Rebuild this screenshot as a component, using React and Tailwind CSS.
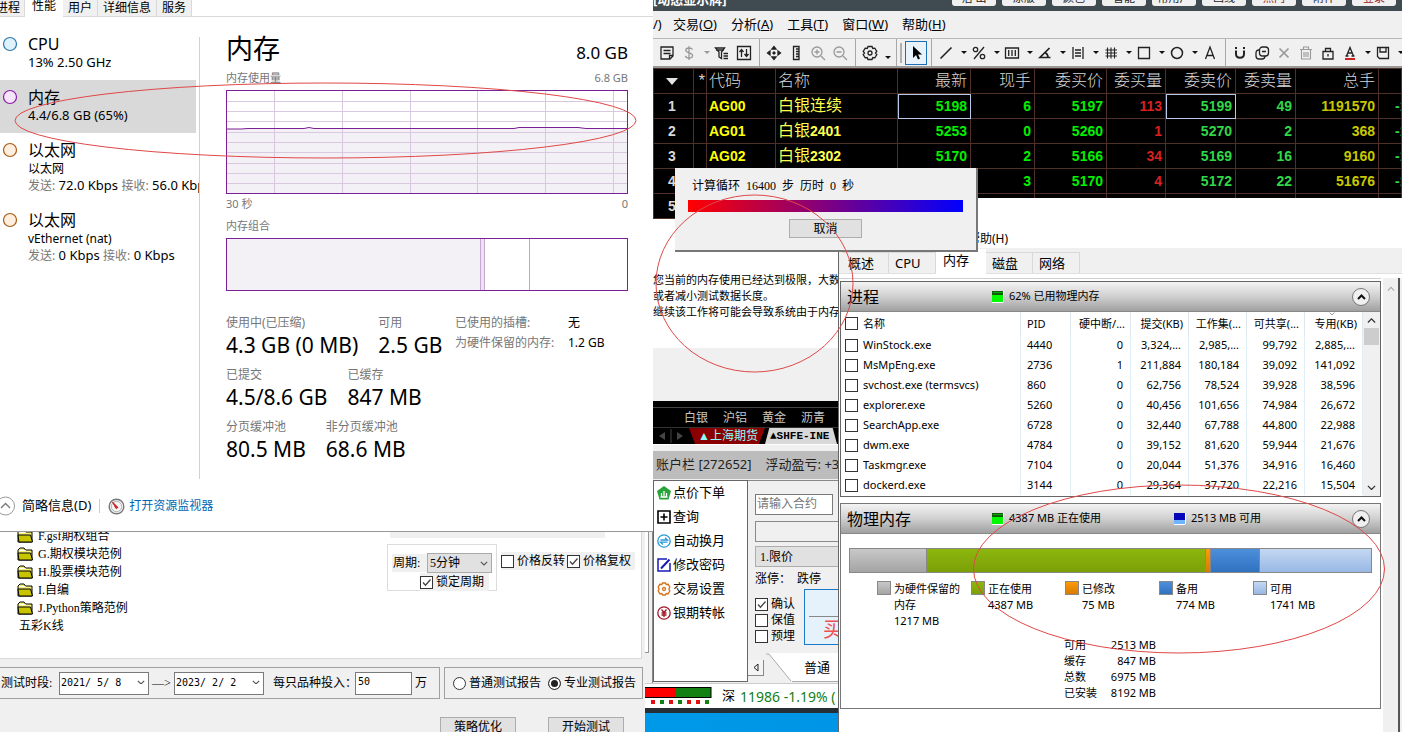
import { useState } from 'react';

const quotes = [
  { code: 'AG00', name: '白银', suffix: '连续', last: '5198', vol: '6', bid: '5197', bidVol: '113', ask: '5199', askVol: '49', total: '1191570' },
  { code: 'AG01', name: '白银', suffix: '2401', last: '5253', vol: '0', bid: '5260', bidVol: '1', ask: '5270', askVol: '2', total: '368' },
  { code: 'AG02', name: '白银', suffix: '2302', last: '5170', vol: '2', bid: '5166', bidVol: '34', ask: '5169', askVol: '16', total: '9160' },
  { code: '', name: '', suffix: '', last: '', vol: '3', bid: '5170', bidVol: '4', ask: '5172', askVol: '22', total: '51676' },
];

const processes = [
  ['WinStock.exe', '4440', '0', '3,324,...', '2,985,...', '99,792', '2,885,...'],
  ['MsMpEng.exe', '2736', '1', '211,884', '180,184', '39,092', '141,092'],
  ['svchost.exe (termsvcs)', '860', '0', '62,756', '78,524', '39,928', '38,596'],
  ['explorer.exe', '5260', '0', '40,456', '101,656', '74,984', '26,672'],
  ['SearchApp.exe', '6728', '0', '32,440', '67,788', '44,800', '22,988'],
  ['dwm.exe', '4784', '0', '39,152', '81,620', '59,944', '21,676'],
  ['Taskmgr.exe', '7104', '0', '20,044', '51,376', '34,916', '16,460'],
  ['dockerd.exe', '3144', '0', '29,364', '37,720', '22,216', '15,504'],
];

const memory = [
  { label: '为硬件保留的内存', mb: 1217, color: 'bg-linear-to-b from-[#c8c8c8] to-[#a4a4a4]' },
  { label: '正在使用', mb: 4387, color: 'bg-linear-to-b from-[#8db60d] to-[#7ba008]' },
  { label: '已修改', mb: 75, color: 'bg-linear-to-b from-[#ff9a0a] to-[#d67c00]' },
  { label: '备用', mb: 774, color: 'bg-linear-to-b from-[#4e8fdc] to-[#2f72c0]' },
  { label: '可用', mb: 1741, color: 'bg-linear-to-b from-[#c4d8f2] to-[#98b8e4]' },
];

function Chevron({ up, className = '' }) {
  return (
    <svg viewBox="0 0 10 6" className={className} fill="none" stroke="currentColor" strokeWidth="1.4">
      <path d={up ? 'M1 5l4-4 4 4' : 'M1 1l4 4 4-4'} />
    </svg>
  );
}

function Check({ label, checked = false, className = '' }) {
  const [on, setOn] = useState(checked);
  return (
    <label className={`flex items-center ${className}`}>
      <span className="relative flex shrink-0">
        <input
          type="checkbox"
          checked={on}
          onChange={() => setOn(!on)}
          className="h-[13px] w-[13px] appearance-none border border-[#333] bg-white"
        />
        {on && (
          <svg viewBox="0 0 13 13" className="pointer-events-none absolute inset-0" fill="none" stroke="#444" strokeWidth="1.3">
            <path d="M3 6.5l2.5 2.7L10.5 3.5" />
          </svg>
        )}
      </span>
      <span className="ml-[3px] whitespace-nowrap">{label}</span>
    </label>
  );
}

/* ---------- Task manager ---------- */

function DeviceItem({ title, stroke, fill, selected, children }) {
  return (
    <button className={`flex w-full items-start pb-[9px] pt-[7px] text-left ${selected ? 'bg-[#d9d9d9]' : ''}`}>
      <svg width="18" height="20" viewBox="0 0 18 20" className="shrink-0">
        <circle cx="10" cy="10" r="6.5" fill={fill} stroke={stroke} strokeWidth="1.2" />
      </svg>
      <span className="ml-[10px] block overflow-hidden whitespace-nowrap text-[13px] leading-[17px]">
        <span className="block text-[16px] leading-5">{title}</span>
        {children}
      </span>
    </button>
  );
}

function Rate({ send, recv }) {
  return (
    <span className="block">
      <span className="text-[12px] text-[#777]">发送:</span> {send} <span className="text-[12px] text-[#777]">接收:</span> {recv}
    </span>
  );
}

function UsageChart() {
  return (
    <svg viewBox="0 0 402 104" preserveAspectRatio="none" className="block h-[104px] w-full">
      <rect width="402" height="104" fill="#fff" />
      <path d="M0 39H15L22 38.5H78L83 37.5L88 38.5H288L293 37H352L360 38.5H402V104H0Z" fill="#f4f1f6" />
      <g stroke="#d9c9e0" strokeWidth="1">
        {[11.5, 21.5, 31.5, 42.5, 52.5, 62.5, 73.5, 83.5, 93.5].map((y) => (
          <line key={y} x1="0" x2="402" y1={y} y2={y} />
        ))}
        {[48.5, 116.5, 184.5, 251.5, 319.5, 387.5].map((x) => (
          <line key={x} x1={x} x2={x} y1="0" y2="104" />
        ))}
      </g>
      <path d="M0 39H15L22 38.5H78L83 37.5L88 38.5H288L293 37.5H352L360 38.5H402" fill="none" stroke="#7a1f96" />
      <rect x="0.5" y="0.5" width="401" height="103" fill="none" stroke="#7a1f96" />
    </svg>
  );
}

function Stat({ label, value }) {
  return (
    <div className="whitespace-nowrap">
      <div className="text-[12px] leading-5 text-[#777]">{label}</div>
      <div className="text-[21px] leading-6">{value}</div>
    </div>
  );
}

function TaskManager() {
  const tabs = ['进程', '性能', '用户', '详细信息', '服务'];
  return (
    <section className="absolute left-0 top-0 z-30 flex h-[532px] w-[653px] flex-col overflow-hidden border-b border-[#999] bg-white text-black">
      <nav className="flex h-[17px] shrink-0 items-end border-b border-[#d9d9d9] text-[12px]">
        {tabs.map((tab) => (
          <button
            key={tab}
            className={
              tab === '性能'
                ? '-mb-px h-[18px] bg-white px-[7px] pb-1 leading-[10px]'
                : tab === '进程'
                  ? 'h-4 w-[25px] border-r border-[#d9d9d9] bg-[#f0f0f0] pr-1 leading-[10px] -indent-1'
                  : 'h-4 border-r border-[#d9d9d9] bg-[#f0f0f0] px-[5px] leading-[10px]'
            }
          >
            {tab}
          </button>
        ))}
      </nav>

      <div className="flex min-h-0 flex-1">
        <aside className="mt-5 flex h-[442px] w-[200px] shrink-0 flex-col border-r border-[#d0d0d0]">
          <div className="-mt-[10px] w-full">
            <DeviceItem title="CPU" stroke="#2a7ab0" fill="#dff1fa">
              <span className="block">13% 2.50 GHz</span>
            </DeviceItem>
            <div className="pr-[3px]">
              <DeviceItem title="内存" stroke="#8a1fa8" fill="#f6e4fb" selected>
                <span className="block">4.4/6.8 GB (65%)</span>
              </DeviceItem>
            </div>
            <DeviceItem title="以太网" stroke="#a85a14" fill="#fdeedd">
              <span className="block text-[12px]">以太网</span>
              <Rate send="72.0 Kbps" recv="56.0 Kbps" />
            </DeviceItem>
            <DeviceItem title="以太网" stroke="#a85a14" fill="#fdeedd">
              <span className="block text-[12px]">vEthernet (nat)</span>
              <Rate send="0 Kbps" recv="0 Kbps" />
            </DeviceItem>
          </div>
        </aside>

        <main className="flex-1 pl-[26px] pr-[25px] pt-3">
          <header className="flex items-end justify-between">
            <h1 className="text-[27px] leading-10">内存</h1>
            <span className="text-[17px] leading-8">8.0 GB</span>
          </header>
          <div className="flex justify-between pb-[3px] text-[11px] leading-[18px] text-[#777]">
            <span>内存使用量</span>
            <span>6.8 GB</span>
          </div>
          <UsageChart />
          <div className="flex justify-between pt-[2px] text-[11px] leading-4 text-[#777]">
            <span>30 秒</span>
            <span>0</span>
          </div>
          <div className="pb-1 pt-[6px] text-[11px] leading-4 text-[#777]">内存组合</div>
          <div className="flex h-[53px] border border-[#7a1f96]">
            <div className="w-[253px] bg-[#f4f1f6]" />
            <div className="w-[5px] border-x border-[#c4a8d0] bg-[#efe0f4]" />
            <div className="w-[45px] border-r border-[#bda8c6]" />
          </div>

          <div className="flex justify-between pt-[22px]">
            <div className="flex flex-col gap-2">
              <div className="flex gap-5">
                <Stat label="使用中(已压缩)" value="4.3 GB (0 MB)" />
                <Stat label="可用" value="2.5 GB" />
              </div>
              <div className="flex gap-5">
                <Stat label="已提交" value="4.5/8.6 GB" />
                <Stat label="已缓存" value="847 MB" />
              </div>
              <div className="flex gap-5">
                <Stat label="分页缓冲池" value="80.5 MB" />
                <Stat label="非分页缓冲池" value="68.6 MB" />
              </div>
            </div>
            <dl className="grid w-[173px] grid-cols-[113px_1fr] content-start whitespace-nowrap text-[12px] leading-5">
              <dt className="text-[#777]">已使用的插槽:</dt>
              <dd>无</dd>
              <dt className="text-[#777]">为硬件保留的内存:</dt>
              <dd>1.2 GB</dd>
            </dl>
          </div>
        </main>
      </div>

      <footer className="flex h-[50px] shrink-0 items-center text-[12px]">
        <button className="flex items-center text-[13px]">
          <svg width="15" height="20" viewBox="0 0 15 20" fill="none">
            <circle cx="5.5" cy="10" r="9" stroke="#999" />
            <path d="M1 12l4.5-4.5L10 12" stroke="#777" strokeWidth="1.3" />
          </svg>
          <span className="ml-[7px]">简略信息(D)</span>
        </button>
        <span className="ml-2 h-[14px] w-px bg-[#ccc]" />
        <svg width="17" height="17" viewBox="0 0 17 17" className="ml-2">
          <circle cx="8.5" cy="8.5" r="7.3" fill="#f4f4f6" stroke="#777" strokeWidth="1.4" />
          <circle cx="8.5" cy="8.5" r="5.2" fill="none" stroke="#9aa" strokeWidth="0.8" />
          <path d="M4.5 4l5.5 5.5-2 1z" fill="#c22" stroke="#c22" />
        </svg>
        <a href="#resmon" className="ml-1 text-[#0066b4]">打开资源监视器</a>
      </footer>
    </section>
  );
}

/* ---------- Backtest window ---------- */

function Folder() {
  return (
    <svg width="17" height="14" viewBox="0 0 17 14" className="shrink-0">
      <path d="M1 13V3l2-2h4l1.5 2H15v10z" fill="#f5f07a" stroke="#000" />
      <path d="M1 6h12.5l2 7H2z" fill="#c8c400" stroke="#000" />
      <path d="M2.5 3.5h6" stroke="#fff" />
    </svg>
  );
}

function Period({ id, value, label }) {
  return (
    <div className="relative">
      <select id={id} aria-label={label} className="block h-[23px] w-[90px] appearance-none border border-[#7a7a7a] bg-white pl-px font-['DejaVu_Sans_Mono',monospace] text-[10px] text-black">
        <option>{value}</option>
      </select>
      <Chevron className="pointer-events-none absolute right-1 top-2 w-2 text-[#555]" />
    </div>
  );
}

function BacktestWindow() {
  const folders = ['F.gsf期权组合', 'G.期权模块范例', 'H.股票模块范例', 'I.自编', 'J.Python策略范例'];
  return (
    <section className="absolute bottom-0 left-0 top-[526px] z-20 flex w-[645px] flex-col overflow-hidden bg-[#f0f0f0] font-['Liberation_Serif','Noto_Sans_CJK_SC',serif] text-[12px] leading-[18px] text-black">
      <div className="mr-[3px] flex h-[133px] shrink-0 border-b border-r border-[#d8d8d8] bg-white">
        <ul className="flex-1 pl-[17px] pt-px">
          {folders.map((name) => (
            <li key={name} className="flex h-[18px] items-center gap-1 whitespace-nowrap">
              <Folder />
              {name}
            </li>
          ))}
          <li className="pl-[2px]">五彩K线</li>
        </ul>
        <div className="w-[254px]">
          <div className="ml-[3px] mr-9 h-3 bg-[#f0f0f0]" />
          <div className="mt-[6px] flex items-start">
            <div className="h-[47px] w-[110px] border border-[#dcdcdc] pt-2">
              <div className="flex items-center">
                <label htmlFor="cycle" className="ml-1 w-[35px] whitespace-nowrap bg-[#f0f0f0] pl-px">周期:</label>
                <div className="relative">
                  <select id="cycle" className="block h-5 w-[65px] appearance-none border border-[#aaa] bg-[#e1e1e1] pl-[2px] text-[12px]">
                    <option>5分钟</option>
                  </select>
                  <Chevron className="pointer-events-none absolute right-1 top-2 w-2 text-[#555]" />
                </div>
              </div>
              <Check label="锁定周期" checked className="ml-8 mr-[7px] bg-[#f0f0f0]" />
            </div>
            <div className="ml-1 mt-2 flex gap-[2px] bg-[#f0f0f0] pr-1">
              <Check label="价格反转" />
              <Check label="价格复权" checked />
            </div>
          </div>
        </div>
      </div>

      <div className="mt-2 flex h-8 shrink-0 gap-1 pr-[2px]">
        <div className="flex flex-1 items-center whitespace-nowrap border border-l-0 border-[#a0a0a0] pl-px">
          <span className="w-[58px]">测试时段:</span>
          <Period id="from" label="开始日期" value="2021/ 5/ 8" />
          <span className="w-[25px] text-center">—&gt;</span>
          <Period id="to" label="结束日期" value="2023/ 2/ 2" />
          <label htmlFor="amount" className="ml-[9px] w-[82px]">每只品种投入：</label>
          <input id="amount" defaultValue="50" className="h-[23px] w-[57px] border border-[#7a7a7a] bg-white pb-1 pl-[2px] font-['DejaVu_Sans_Mono',monospace] text-[10px]" />
          <span className="ml-[3px]">万</span>
        </div>
        <div className="flex w-[199px] items-center justify-between border border-[#a0a0a0] pl-2 pr-[6px]">
          {['普通测试报告', '专业测试报告'].map((name, i) => (
            <label key={name} className="flex items-center gap-[3px] whitespace-nowrap">
              <input
                type="radio"
                name="report"
                defaultChecked={i === 1}
                className="h-[13px] w-[13px] appearance-none rounded-full border border-[#333] bg-white checked:bg-[#222] checked:shadow-[inset_0_0_0_2px_#fff]"
              />
              {name}
            </label>
          ))}
        </div>
      </div>

      <div className="mt-[18px] flex justify-end gap-8 pr-[21px]">
        {['策略优化', '开始测试'].map((name) => (
          <button key={name} className="h-5 w-[76px] border border-[#adadad] bg-[#e1e1e1] leading-[18px]">{name}</button>
        ))}
      </div>
    </section>
  );
}

/* ---------- Trading terminal ---------- */

function Tool({ children, label, active, dim }) {
  return (
    <button
      aria-label={label}
      className={`flex h-6 w-[22px] shrink-0 items-center justify-center ${active ? 'border border-[#1a6fb5] bg-[#e9f3fb]' : ''}`}
    >
      <svg width="16" height="16" viewBox="0 0 16 16" fill="none" stroke={dim ? '#999' : '#222'} strokeWidth="1.3">
        {children}
      </svg>
    </button>
  );
}

function Drop({ low, dim }) {
  return (
    <svg width="11" height="6" viewBox="0 0 11 6" className={`shrink-0 ${low ? 'mt-[10px]' : ''}`}>
      <path d="M4 1h6L7 4z" fill={dim ? '#999' : '#111'} />
    </svg>
  );
}

function Sep() {
  return (
    <span className="flex h-7 w-2 shrink-0 justify-center">
      <span className="w-px bg-[#a8a8a8]" />
    </span>
  );
}

function Toolbar() {
  return (
    <div className="flex h-[30px] shrink-0 items-center overflow-hidden border-b-2 border-t border-b-[#999] border-t-[#b8b8b8] bg-[#f0f0f0] pl-[3px]">
      <Tool label="报表"><path d="M2 2h12v9l-3 3H2zM4.500 5.500h7M4.500 8.500h7M14 10.500h-3.500V14" /></Tool>
      <Tool label="资金" dim><path d="M8 1v14M11.500 4.500C11 3.300 9.800 3 8 3 6.200 3 4.800 3.800 4.800 5.300 4.800 8.500 11.600 7 11.600 10.500 11.600 12.200 10 13 8 13 6 13 4.700 12.300 4.400 10.800" /></Tool>
      <Drop dim />
      <Tool label="筛选"><path d="M1.500 3h9L7.500 7v6.500L5 12V7zM2 5h8M9.500 8.500H14M9.500 11H14M9.500 13.500H14" /></Tool>
      <Tool label="排序"><path d="M1.500 1.500h13v13h-13zM5.500 12V5M3.500 7l2-2.500 2 2.500M10.500 4v7M8.500 9l2 2.500 2-2.500" /></Tool>
      <Sep />
      <Tool label="移动"><path d="M6 4l2-2.500L10 4zM6 12l2 2.500 2-2.500zM4 6L1.500 8 4 10zM12 6l2.500 2-2.500 2z" fill="#222" /><path d="M6.500 8h3M8 6.500v3" strokeWidth="2" /></Tool>
      <Tool label="标尺"><path d="M5.500 1.500h5.500v13H5.500zM8 4h3M8 6.500h3M8 9h3M8 11.500h3" /></Tool>
      <Tool label="放大" dim><circle cx="7" cy="7" r="5" /><path d="M11 11l4 4M4.500 7h5M7 4.500v5" /></Tool>
      <Tool label="缩小" dim><circle cx="7" cy="7" r="5" /><path d="M11 11l4 4M4.500 7h5" /></Tool>
      <Sep />
      <Tool label="设置"><path d="M6 1.500h4l.8 2 2-.3 2 3.300L13.500 8l1.300 1.500-2 3.300-2-.3-.8 2H6l-.8-2-2 .3-2-3.300L2.500 8 1.200 6.500l2-3.300 2 .3z" /><circle cx="8" cy="8" r="2" /></Tool>
      <Drop low />
      <Sep />
      <span className="mr-[3px] h-5 w-[3px] border-x border-[#b0b0b0]" />
      <Tool label="选择" active><path d="M5 1v12l3-3 2 4.500 2-1-2-4h4z" fill="#000" stroke="none" /></Tool>
      <Sep />
      <Tool label="直线"><path d="M2.500 13.500l11-11" strokeWidth="1.6" /></Tool>
      <Drop />
      <Tool label="百分比"><circle cx="4.500" cy="4.500" r="2.200" /><circle cx="11.500" cy="11.500" r="2.200" /><path d="M13 2L3 14" /></Tool>
      <Drop />
      <Tool label="周期线"><path d="M1.500 3h13v10h-13zM4.700 5v6M8 5v6M11.300 5v6" /></Tool>
      <Drop />
      <Tool label="角度"><path d="M12.500 3L3 12.500h10.500M8 7.500c2 1 3 2.500 3 5" strokeWidth="1.7" /></Tool>
      <Drop />
      <Tool label="平行线"><path d="M3 2v12M13 2v12M5 5h6M5 8h6M5 11h6" /></Tool>
      <Drop />
      <Tool label="网格"><path d="M4.500 2.500v11M8 2.500v11M11.500 2.500v11M2.500 5h11.500M2.500 8h11.500M2.500 11h11.500" strokeWidth="1.1" /></Tool>
      <Drop />
      <Tool label="矩形"><path d="M2.500 2.500h11v11h-11z" /></Tool>
      <Drop />
      <Tool label="圆"><circle cx="8" cy="8" r="5.500" strokeWidth="1.5" /></Tool>
      <Drop />
      <Tool label="文字"><path d="M3.500 14L8 2l4.500 12M5 10.500h6" /></Tool>
      <Sep />
      <Tool label="吸附"><path d="M4 5.500V9c0 5 8 5 8 0V5.500M4 2v2M12 2v2" strokeWidth="2" /></Tool>
      <Tool label="复制"><rect x="5.500" y="2" width="9" height="9" rx="3" /><path d="M5 5c-2 0-3 1-3 3v3c0 2 1 3 3 3h3c2 0 3-1 3-3M8 6.500h4" /></Tool>
      <Tool label="清除" dim><path d="M3.500 3.500l9 9M12.500 3.500l-9 9" strokeWidth="1.7" /></Tool>
      <Tool label="删除" dim><path d="M2 4.500h12M5.500 4V2h5v2M3.500 5v9h9V5M6 7v5M8 7v5M10 7v5" strokeWidth="1.1" /></Tool>
      <Tool label="锁定"><path d="M3 6.500h10V14H3zM5.500 6V3.500h5V6M8 9v2.500" /></Tool>
      <Tool label="字色"><path d="M4.500 11L8 2.500 11.500 11M5.500 8h5M3.500 11h3M9.500 11h3" /><path d="M3 14h10" stroke="#c22" strokeWidth="2" /></Tool>
      <Drop />
      <Tool label="保存"><path d="M2.500 2.500h11v11h-9l-2-2zM5 3v4h6V3" /></Tool>
      <Drop />
    </div>
  );
}

function QuoteTable() {
  const head = ['代码', '名称', '最新', '现手', '委买价', '委买量', '委卖价', '委卖量', '总手'];
  const cell = 'h-[25px] border border-[#4e3028] pr-[3px]';
  return (
    <table className="w-full table-fixed border-collapse bg-black text-right font-['Liberation_Sans','Noto_Sans_CJK_SC',sans-serif] text-[14px] leading-5">
      <colgroup>
        <col className="w-10" />
        <col className="w-[13px]" />
        <col className="w-[69px]" />
        <col className="w-[122px]" />
        <col className="w-[73px]" />
        <col className="w-16" />
        <col className="w-[72px]" />
        <col className="w-[59px]" />
        <col className="w-[70px]" />
        <col className="w-[60px]" />
        <col className="w-[83px]" />
        <col />
      </colgroup>
      <thead>
        <tr className="text-[16px] text-[#d8d8d8]">
          <th className={`${cell} pr-0`}>
            <svg width="12" height="7" viewBox="0 0 12 7" className="mx-auto"><path d="M0 0h12L6 7z" fill="#e4e4e4" /></svg>
          </th>
          <th className={`${cell} pr-px font-normal`}>*</th>
          {head.map((name, i) => (
            <th key={name} className={`${cell} pl-[2px] font-light ${i < 2 ? 'text-left' : ''}`}>{name}</th>
          ))}
          <th className={cell} />
        </tr>
      </thead>
      <tbody className="font-bold">
        {quotes.map((q, i) => (
          <tr key={i} className="text-[#00f000]">
            <td className={`${cell} pr-0 text-center text-[#d8d8d8]`}>{i + 1}</td>
            <td className={cell} />
            <td className={`${cell} pl-[2px] text-left text-[#ffff00]`}>{q.code}</td>
            <td className={`${cell} whitespace-nowrap pl-[2px] text-left text-[#ffff50]`}>
              <span className="text-[16px] font-normal">{q.name}</span>
              <span className={q.suffix === '连续' ? 'text-[16px] font-normal' : ''}>{q.suffix}</span>
            </td>
            <td className={`${cell} ${i === 0 ? 'outline-1 -outline-offset-1 outline-[#b8c8e8]' : ''}`}>{q.last}</td>
            <td className={cell}>{q.vol}</td>
            <td className={cell}>{q.bid}</td>
            <td className={`${cell} text-[#d82020]`}>{q.bidVol}</td>
            <td className={`${cell} text-[#30d848] ${i === 0 ? 'outline-1 -outline-offset-1 outline-[#b8c8e8]' : ''}`}>{q.ask}</td>
            <td className={`${cell} text-[#30d848]`}>{q.askVol}</td>
            <td className={`${cell} text-[#c8c800]`}>{q.total}</td>
            <td className={`${cell} overflow-hidden whitespace-nowrap pl-4 pr-0 text-left text-[#30d848]`}>-1</td>
          </tr>
        ))}
        <tr>
          <td className={`${cell} pr-0 text-center text-[#d8d8d8]`}>5</td>
          {Array.from({ length: 11 }, (_, i) => (
            <td key={i} className={cell} />
          ))}
        </tr>
      </tbody>
    </table>
  );
}

function AccountMenu() {
  const icon = { width: 14, height: 14, viewBox: '0 0 14 14', fill: 'none', strokeWidth: 1.3 };
  const items = [
    ['点价下单', <svg {...icon}><path d="M7 0l7 5-2.500 8.500h-9L0 5z" fill="#27a33a" /><path d="M4.500 7v4M7 5v6M9.500 7v4M3.500 11h7" stroke="#fff" /></svg>],
    ['查询', <svg {...icon} stroke="#000"><path d="M1 1h12v12H1zM7 3.500v7M3.500 7h7" strokeWidth="1.600" /></svg>],
    ['自动换月', <svg {...icon} stroke="#2a98d8"><circle cx="7" cy="7" r="6.200" /><path d="M3.500 6h7L8 3.800M10.500 8.200h-7L6 10.400" /></svg>],
    ['修改密码', <svg {...icon} stroke="#1818b8"><path d="M10 1H1v12h12V5" strokeWidth="1.500" /><path d="M4 10.500L12.500 1.500" strokeWidth="2" /></svg>],
    ['交易设置', <svg {...icon} stroke="#d87018"><path d="M5.500 1h3l.7 1.500 2-.2 1.600 2.700L11.900 7l.9 2-1.600 2.700-2-.2L8.500 13h-3l-.7-1.500-2 .2L1.200 9l.9-2-.9-2 1.600-2.700 2 .2z" /><circle cx="7" cy="7" r="1.500" /></svg>],
    ['银期转帐', <svg {...icon} stroke="#a01828"><circle cx="7" cy="7" r="6.200" /><path d="M4.500 3.500L7 6.500l2.500-3M7 6.500V11M4.500 7h5M4.500 9h5" /></svg>],
  ];
  return (
    <ul className="h-[202px] w-[95px] shrink-0 border border-[#666] bg-white text-[13px]">
      {items.map(([name, glyph]) => (
        <li key={name}>
          <button className="flex h-6 items-center gap-[2px] whitespace-nowrap pl-[3px]">
            {glyph}
            {name}
          </button>
        </li>
      ))}
    </ul>
  );
}

function OrderForm() {
  return (
    <div className="flex min-w-0 flex-1 flex-col border-t border-[#888] text-[12px] leading-4">
      <div className="flex flex-col pl-[7px] font-['Liberation_Serif','Noto_Sans_CJK_SC',serif]">
        <input aria-label="合约" placeholder="请输入合约" className="mt-[13px] h-[21px] w-[78px] border border-[#7a7a7a] bg-white pl-px placeholder:text-[#777]" />
        <div className="mt-[6px] h-[21px] border border-[#8a8a8a]" />
        <button className="mt-1 h-[21px] border border-[#adadad] bg-[#e1e1e1] pl-1 text-left">1.限价</button>
        <div className="mt-1 flex h-4 gap-[6px]">
          <span>涨停：</span>
          <span>跌停</span>
        </div>
        <div className="mt-[2px] flex">
          <div className="w-[49px] pt-[7px]">
            <Check label="确认" checked />
            <Check label="保值" />
            <Check label="预埋" />
          </div>
          <button className="flex h-14 min-w-0 flex-1 flex-col justify-end overflow-hidden border border-[#1a78c8] bg-[#e5f1fb] pl-1">
            <span className="w-full whitespace-nowrap border-t border-[#888] pl-[14px] text-left text-[20px] leading-[27px] text-[#f05050]">买</span>
          </button>
        </div>
      </div>
      <div className="mt-2 flex h-[29px] items-center">
        <button aria-label="向左" className="flex h-4 w-4 items-center justify-center border-b border-r border-[#888] bg-[#f4f4f4]">
          <svg width="6" height="9" viewBox="0 0 6 9"><path d="M5 1L1 4.500 5 8z" fill="none" stroke="#222" /></svg>
        </button>
        <svg width="26" height="29" viewBox="0 0 26 29" className="ml-[2px] shrink-0">
          <path d="M0 1h3l22 27h1V0H0z" fill="#fff" stroke="none" />
          <path d="M0 1h3l22 27" fill="none" stroke="#aaa" />
        </svg>
        <span className="flex h-full flex-1 items-center border-b border-[#aaa] bg-white pl-3 text-[13px]">普通</span>
      </div>
    </div>
  );
}

function TradingWindow() {
  const menus = [['交易', 'O'], ['分析', 'A'], ['工具', 'T'], ['窗口', 'W'], ['帮助', 'H']];
  const shortcuts = ['沽 出', '原版', '颜色', '智能', '常用户', '画线', '热门', '附件', '登录'];
  return (
    <section className="absolute left-[645px] right-0 top-0 z-10 flex h-[708px] flex-col overflow-hidden bg-[#f0f0f0] text-black">
      <div className="flex min-h-0 flex-1">
        <div className="w-[7px] shrink-0 pt-[531px]">
          <div className="h-[122px] w-1 border-b border-r border-[#999] bg-white" />
        </div>
        <div className="flex min-w-0 flex-1 flex-col border-l border-[#888]">
          <div className="flex h-[11px] shrink-0 items-start justify-between overflow-hidden bg-[#3f4b50] text-white">
            <h2 className="-mt-[9px] text-[13px] font-bold leading-4">[动态显示牌]</h2>
            <div className="flex gap-[6px] pr-[6px]">
              {shortcuts.map((name, i) => (
                <button
                  key={name}
                  className={`-mt-[11px] h-[17px] w-11 whitespace-nowrap rounded-[3px] bg-[#f0f0f0] text-[11px] leading-4 ${i === 6 || i === 8 ? 'text-[#a02020]' : 'text-[#222]'}`}
                >
                  {name}
                </button>
              ))}
            </div>
          </div>
          <nav className="flex h-[27px] shrink-0 items-center gap-[14px] text-[13px]">
            <button className="w-[6px] whitespace-nowrap">/)</button>
            {menus.map(([name, key]) => (
              <button key={key} className="whitespace-nowrap">{name}(<u>{key}</u>)</button>
            ))}
          </nav>
          <Toolbar />
          <div className="flex-1 overflow-hidden bg-black">
            <QuoteTable />
          </div>

          <div className="h-[45px] shrink-0 border-b border-white bg-black text-[#c8c8c8]">
            <div className="mt-[7px] flex h-5 items-center gap-[15px] border-t border-[#444] pl-[31px] text-[12px]">
              <span>白银</span>
              <span>沪铝</span>
              <span>黄金</span>
              <span>沥青</span>
            </div>
            <div className="flex h-[17px] items-center border-t border-[#333] font-['Liberation_Serif','Noto_Sans_CJK_SC',serif] text-[12px] leading-4">
              <svg width="36" height="16" viewBox="0 0 36 16" fill="#444"><path d="M12 4v8L6 8zM24 4v8l6-4z" /><path d="M18 1v14" stroke="#444" /></svg>
              <button className="w-[76px] whitespace-nowrap bg-[#8a0000] pl-[9px] text-left text-[#8ff] [clip-path:polygon(0_0,100%_0,92%_100%,8%_100%)]">▲上海期货</button>
              <button className="w-[72px] whitespace-nowrap bg-[#d8d8d8] pl-[5px] text-left font-['Liberation_Mono','DejaVu_Sans',monospace] text-[11px] font-bold text-black [clip-path:polygon(6%_0,94%_0,100%_100%,0_100%)]">▲SHFE-INE</button>
            </div>
          </div>
          <div className="flex h-[35px] shrink-0 items-center gap-[14px] whitespace-nowrap border-b border-t-[6px] border-b-[#f0f0f0] border-t-[#f0f0f0] bg-[#bcbcbc] pl-[3px] text-[13px] text-[#222]">
            <span>账户栏 [272652]</span>
            <span>浮动盈亏: +3</span>
          </div>
          <div className="flex h-[203px] w-[186px] shrink-0">
            <AccountMenu />
            <OrderForm />
          </div>
        </div>
      </div>
      <footer className="flex h-[25px] shrink-0 items-center border-t border-[#ccc] bg-white text-[13px]">
        <svg width="67" height="18" viewBox="0 0 67 18">
          <rect x="-1" y="0.500" width="67" height="10" fill="#128012" stroke="#000" />
          <rect x="0" y="1" width="31" height="9" fill="#f00" />
          {[0, 1, 2, 3, 4, 5, 6].map((n) => (
            <rect key={n} x={6 + n * 9} y="13" width="4" height="4" fill={n === 1 || n === 3 || n === 6 ? '#128012' : '#e01010'} />
          ))}
        </svg>
        <span className="ml-[10px] flex items-center gap-[5px] whitespace-nowrap">
          深 <span className="text-[14px] text-[#128012]">11986 -1.19% (</span>
        </span>
      </footer>
    </section>
  );
}

function WarningBox() {
  return (
    <section className="absolute left-[653px] top-[219px] z-20 w-[186px] overflow-hidden whitespace-nowrap bg-[#f0f0f0] pb-[53px] text-[11px] leading-4 text-black">
      <p className="bg-white pb-7 pt-[53px]">
        您当前的内存使用已经达到极限，大数<br />
        或者减小测试数据长度。<br />
        继续该工作将可能会导致系统由于内存
      </p>
    </section>
  );
}

function ProgressDialog() {
  return (
    <section className="absolute left-[675px] top-[168px] z-40 w-[303px] border-b-2 border-r-2 border-[#777] bg-[#f0f0f0] px-[13px] pb-3 pt-[9px] font-['Liberation_Serif','Noto_Sans_CJK_SC',serif] text-[12px] leading-[18px] text-black">
      <p className="pl-1">计算循环&nbsp; 16400&nbsp; 步&nbsp; 历时&nbsp; 0&nbsp; 秒</p>
      <div className="mt-[5px] h-3 bg-linear-to-r/srgb from-[#ff0000] to-[#0000ff]" />
      <button className="mx-auto mt-[7px] block h-[19px] w-[73px] border border-[#adadad] bg-[#e1e1e1] leading-4">取消</button>
    </section>
  );
}

/* ---------- Resource monitor ---------- */

function Meter({ blue }) {
  return (
    <svg width="12" height="12" viewBox="0 0 12 12" className="shrink-0">
      <rect width="12" height="12" fill={blue ? '#0404b8' : '#0c5c0c'} />
      <rect y={blue ? 7 : 4} width="11" height={blue ? 5 : 8} fill={blue ? '#70b4ff' : '#00f800'} />
      {!blue && <path d="M2 1v1M4 1v1M6 1v1M8 1v1M10 1v1" stroke="#00f800" />}
      <path d="M11.500 0v11.500H0" fill="none" stroke="#fff" />
    </svg>
  );
}

function PanelHeader({ title, children }) {
  return (
    <header className="flex h-[30px] items-center border-b border-[#888] bg-linear-to-b from-[#f4f4f4] via-[#d0d0d0] to-[#a0a0a0] pl-[6px] pr-[10px] text-[11px]">
      <h3 className="w-[145px] text-[16px] leading-5">{title}</h3>
      {children}
      <button aria-label="折叠" className="ml-auto flex h-[18px] w-[18px] items-center justify-center rounded-full border border-[#777] bg-[#f0f0f0]">
        <svg width="9" height="6" viewBox="0 0 9 6"><path d="M1 5l3.500-3.500L8 5" fill="none" stroke="#111" strokeWidth="2" /></svg>
      </button>
    </header>
  );
}

function ProcessTable() {
  const head = ['名称', 'PID', '硬中断/...', '提交(KB)', '工作集(...', '可共享(...', '专用(KB)'];
  return (
    <table className="mb-px w-full table-fixed border-collapse text-right text-[11px] leading-4">
      <colgroup>
        <col />
        <col className="w-[50px]" />
        <col className="w-[60px]" />
        <col className="w-[58px]" />
        <col className="w-[58px]" />
        <col className="w-[58px]" />
        <col className="w-[58px]" />
      </colgroup>
      <thead>
        <tr className="h-[23px]">
          {head.map((name, i) => (
            <th key={name} className={`relative whitespace-nowrap border-r border-[#e0e6ee] p-0 font-normal ${i === 0 ? 'text-left' : i === 1 ? 'pl-[6px] text-left' : 'pr-[5px]'}`}>
              {i === 0 ? <Check label={name} className="gap-[2px] pl-1" /> : name}
              {i === 6 && <Chevron className="absolute left-6 top-0 w-[6px] text-[#888]" />}
            </th>
          ))}
        </tr>
      </thead>
      <tbody>
        {processes.map((row) => (
          <tr key={row[0]} className="h-5">
            {row.map((value, i) => (
              <td key={i} className={`whitespace-nowrap border-r border-[#e0eef8] p-0 ${i === 0 ? 'text-left' : i === 1 ? 'pl-[6px] text-left' : 'pr-[7px]'}`}>
                {i === 0 ? <Check label={value} className="gap-[2px] pl-1" /> : value}
              </td>
            ))}
          </tr>
        ))}
      </tbody>
    </table>
  );
}

function ResourceMonitor() {
  const tabs = ['概述', 'CPU', '内存', '磁盘', '网络'];
  const totals = [['可用', '2513 MB'], ['缓存', '847 MB'], ['总数', '6975 MB'], ['已安装', '8192 MB']];
  return (
    <section className="absolute bottom-0 left-[838px] right-0 top-[198px] z-30 flex flex-col overflow-hidden border-l border-[#666] bg-white text-black">
      <div className="flex h-[50px] shrink-0 items-end pb-px pl-[129px] text-[12px] leading-4">帮助(H)</div>
      <nav className="flex h-[26px] shrink-0 items-end border-b border-[#e0e0e0] bg-[#f0f0f0] pl-[3px] text-[13px]">
        {tabs.map((tab) => (
          <button
            key={tab}
            className={
              tab === '内存'
                ? '-mb-px h-[25px] w-[50px] bg-white pb-1 pl-[7px] text-left leading-5'
                : 'h-[21px] w-[47px] border-r border-t border-[#d9d9d9] pl-[6px] text-left leading-5'
            }
          >
            {tab}
          </button>
        ))}
      </nav>
      <div className="flex min-h-0 flex-1 pt-1">
        <div className="min-w-0 flex-1 border-t border-[#d0d0d0] pl-px pt-[2px]">
          <div className="border border-[#666]">
            <PanelHeader title="进程">
              <Meter />
              <span className="ml-[5px]">62% 已用物理内存</span>
            </PanelHeader>
            <div className="flex">
              <div className="min-w-0 flex-1">
                <ProcessTable />
              </div>
              <div className="flex w-[17px] flex-col items-center bg-[#f0f0f0] py-[6px] text-[#333]">
                <Chevron up className="w-[9px]" />
                <div className="mt-[5px] h-[17px] w-[15px] bg-[#cdcdcd]" />
                <Chevron className="mt-auto w-[9px]" />
              </div>
            </div>
          </div>

          <div className="mt-[6px] border border-[#777]">
            <PanelHeader title="物理内存">
              <div className="flex w-[182px] items-center gap-[5px]"><Meter />4387 MB 正在使用</div>
              <div className="flex items-center gap-[5px]"><Meter blue />2513 MB 可用</div>
            </PanelHeader>
            <div className="px-2 pt-[14px]">
              <div className="flex h-[25px] border border-[#888]">
                {memory.map((m, i) => (
                  <div key={m.label} className={`${m.color} ${i < 4 ? 'border-r border-[#888]' : ''}`} style={{ width: `${(m.mb / 8194) * 100}%` }} />
                ))}
              </div>
              <ul className="mt-2 flex pl-7 text-[11px] leading-4">
                {memory.map((m) => (
                  <li key={m.label} className="flex w-[94px] gap-[3px]">
                    <span className={`h-[14px] w-[14px] shrink-0 border border-[#888] ${m.color}`} />
                    <span className="w-[70px]">
                      {m.label}<br />
                      {m.mb} MB
                    </span>
                  </li>
                ))}
              </ul>
              <dl className="mb-[7px] ml-[215px] mt-2 grid w-[92px] grid-cols-[auto_auto] justify-between text-[11px] leading-4">
                {totals.map(([name, value]) => (
                  <div key={name} className="contents">
                    <dt>{name}</dt>
                    <dd className="text-right">{value}</dd>
                  </div>
                ))}
              </dl>
            </div>
          </div>
        </div>
        <div className="ml-[2px] flex w-[17px] justify-center border-r-2 border-[#555] bg-[#f0f0f0] pt-2 text-[#aaa]">
          <Chevron up className="h-[6px] w-2" />
        </div>
        <div className="w-[2px] bg-[#f0f0f0]" />
      </div>
    </section>
  );
}

function Annotations() {
  return (
    <svg className="pointer-events-none absolute inset-0 z-50 h-full w-full" fill="none" stroke="#e04848">
      <ellipse cx="325.500" cy="120.500" rx="310.500" ry="37.500" />
      <ellipse cx="754.500" cy="283.500" rx="98.500" ry="88.500" />
      <ellipse cx="1179" cy="569" rx="205.500" ry="84" />
    </svg>
  );
}

function App() {
  return (
    <div className="relative h-screen w-full overflow-hidden bg-linear-to-r from-[#00a8f4] to-[#0088dc] font-['Noto_Sans','Noto_Sans_CJK_SC',sans-serif]">
      <div className="absolute inset-x-0 top-[708px] h-[5px] bg-[#252f35]" />
      <TradingWindow />
      <BacktestWindow />
      <WarningBox />
      <TaskManager />
      <ResourceMonitor />
      <ProgressDialog />
      <Annotations />
    </div>
  );
}

export default App;
